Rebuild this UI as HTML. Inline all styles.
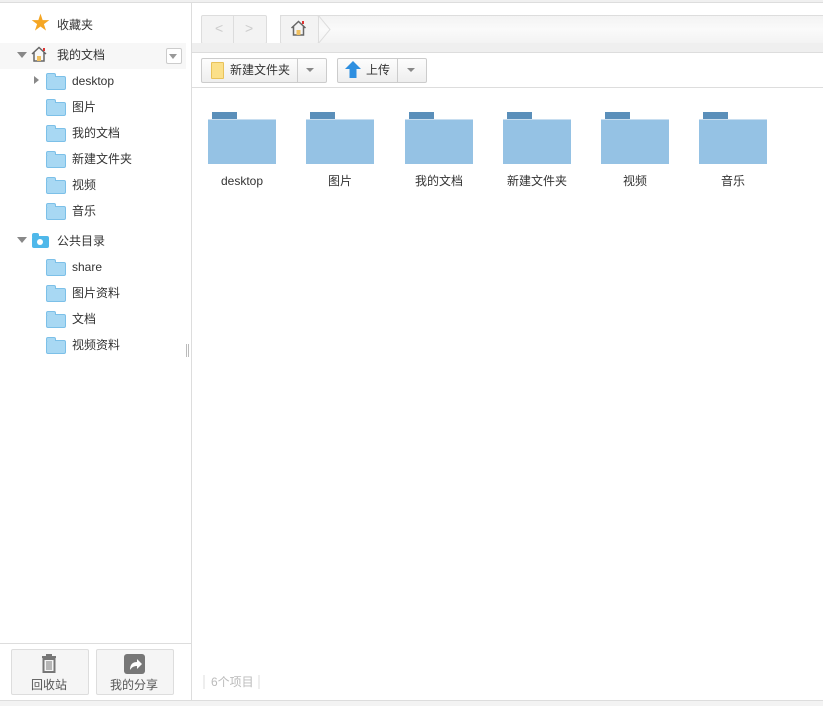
<!DOCTYPE html><html><head><meta charset="utf-8"><style>
body{margin:0;width:823px;height:705px;position:relative;background:#fff;font-family:"Liberation Sans","Noto Sans CJK SC",sans-serif;font-size:12px;color:#333;overflow:hidden}
.a{position:absolute}
.fi{position:absolute;width:18px;height:12px;background:#a8d8f3;border:1px solid #7cc0e8;border-radius:2px}
.fi:before{content:"";position:absolute;left:-1px;top:-4px;width:8px;height:3px;background:#a8d8f3;border:1px solid #7cc0e8;border-bottom:none;border-radius:2px 2px 0 0}
.t{position:absolute;font-size:12px;color:#333;line-height:14px;white-space:nowrap}
.big{position:absolute;top:112px;width:68px;height:51px}
.big i{position:absolute;left:4px;top:0;width:25px;height:7px;background:#5a8fba}
.big b{position:absolute;left:0;top:7px;width:68px;height:44px;background:#95c2e4;border-top:1px solid #c8def0}
.lb{position:absolute;top:174px;width:98px;text-align:center;font-size:12px;line-height:14px}
.btn{position:absolute;border:1px solid #ccc;border-radius:2px;background:linear-gradient(#fdfdfd,#eee)}
</style></head><body>
<div class="a" style="left:0;top:0;width:823px;height:2px;background:#f0f0f0"></div>
<div class="a" style="left:0;top:2px;width:823px;height:1px;background:#ddd"></div>
<div class="a" style="left:191px;top:3px;width:1px;height:702px;background:#ddd"></div>
<div class="a" style="left:0;top:700px;width:823px;height:5px;background:#f3f3f3;border-top:1px solid #ddd"></div>
<!-- sidebar -->
<div class="a" style="left:31px;top:14px;color:#f5a623;font-size:19px;line-height:20px">★</div>
<div class="t" style="left:57px;top:18px">收藏夹</div>
<div class="a" style="left:0;top:43px;width:186px;height:26px;background:#f7f7f7"></div>
<div class="a" style="left:17px;top:52px;border:5px solid transparent;border-top:6px solid #888;border-bottom:none"></div>
<svg class="a" style="left:31px;top:46px" width="16" height="16"><path d="M1 8L8 1.5 15 8M3 6.5V15H13V6.5" fill="none" stroke="#666" stroke-width="1.5"/><rect x="6" y="10" width="4" height="5" fill="#f0c060"/><rect x="12" y="2" width="2" height="3" fill="#d33"/></svg>
<div class="t" style="left:57px;top:48px">我的文档</div>
<div class="a" style="left:166px;top:48px;width:14px;height:14px;border:1px solid #ccc;border-radius:2px;background:#fff"></div>
<div class="a" style="left:169px;top:54px;border:4px solid transparent;border-top:5px solid #999;border-bottom:none"></div>
<div class="a" style="left:34px;top:76px;border:4px solid transparent;border-left:5px solid #888;border-right:none"></div>
<div class="fi" style="left:46px;top:76px"></div><div class="t" style="left:72px;top:74px">desktop</div>
<div class="fi" style="left:46px;top:102px"></div><div class="t" style="left:72px;top:100px">图片</div>
<div class="fi" style="left:46px;top:128px"></div><div class="t" style="left:72px;top:126px">我的文档</div>
<div class="fi" style="left:46px;top:154px"></div><div class="t" style="left:72px;top:152px">新建文件夹</div>
<div class="fi" style="left:46px;top:180px"></div><div class="t" style="left:72px;top:178px">视频</div>
<div class="fi" style="left:46px;top:206px"></div><div class="t" style="left:72px;top:204px">音乐</div>
<div class="a" style="left:17px;top:237px;border:5px solid transparent;border-top:6px solid #888;border-bottom:none"></div>
<div class="a" style="left:32px;top:236px;width:17px;height:12px;background:#4fb8ea;border-radius:2px"></div>
<div class="a" style="left:32px;top:233px;width:7px;height:4px;background:#4fb8ea;border-radius:2px 2px 0 0"></div>
<div class="a" style="left:37px;top:239px;width:6px;height:6px;background:#fff;border-radius:50%"></div>
<div class="t" style="left:57px;top:234px">公共目录</div>
<div class="fi" style="left:46px;top:262px"></div><div class="t" style="left:72px;top:260px">share</div>
<div class="fi" style="left:46px;top:288px"></div><div class="t" style="left:72px;top:286px">图片资料</div>
<div class="fi" style="left:46px;top:314px"></div><div class="t" style="left:72px;top:312px">文档</div>
<div class="fi" style="left:46px;top:340px"></div><div class="t" style="left:72px;top:338px">视频资料</div>
<div class="a" style="left:186px;top:344px;width:1px;height:13px;background:#bbb"></div>
<div class="a" style="left:188px;top:344px;width:1px;height:13px;background:#bbb"></div>
<div class="a" style="left:0;top:643px;width:191px;height:1px;background:#ddd"></div>
<div class="btn" style="left:11px;top:649px;width:76px;height:44px;background:#f5f5f5;border-color:#ddd"></div>
<svg class="a" style="left:40px;top:653px" width="18" height="20"><rect x="2" y="3" width="14" height="2" fill="#777"/><rect x="6" y="1" width="6" height="2" fill="#777"/><rect x="3.5" y="6" width="11" height="13" fill="none" stroke="#777" stroke-width="2"/><path d="M7 8v9M9 8v9M11 8v9" stroke="#777"/></svg>
<div class="t" style="left:31px;top:678px;color:#555">回收站</div>
<div class="btn" style="left:96px;top:649px;width:76px;height:44px;background:#f5f5f5;border-color:#ddd"></div>
<div class="a" style="left:124px;top:654px;width:21px;height:20px;background:#777;border-radius:3px"></div>
<svg class="a" style="left:124px;top:654px" width="21" height="20"><path d="M6 16C6 10 9 8 13 8V5l5 5-5 5v-3c-3 0-5 1-7 4z" fill="#fff"/></svg>
<div class="t" style="left:110px;top:678px;color:#555">我的分享</div>
<!-- toolbars -->
<div class="a" style="left:192px;top:3px;width:631px;height:39px;background:#fff"></div>
<div class="a" style="left:280px;top:15px;width:543px;height:27px;background:linear-gradient(#f3f3f3,#fafafa 50%,#f3f3f3);border-top:1px solid #ddd;border-bottom:1px solid #ddd"></div>
<div class="btn" style="left:201px;top:15px;width:64px;height:27px;background:#f3f3f3;border-color:#ddd"></div>
<div class="a" style="left:233px;top:15px;width:1px;height:29px;background:#ddd"></div>
<div class="a" style="left:215px;top:20px;color:#ccc;font-size:14px">&lt;</div>
<div class="a" style="left:245px;top:20px;color:#ccc;font-size:14px">&gt;</div>
<div class="btn" style="left:280px;top:15px;width:37px;height:27px;background:#f3f3f3;border-color:#ddd"></div>
<svg class="a" style="left:290px;top:20px" width="17" height="16"><path d="M1.5 8L8.5 1.5 15.5 8M3.5 6.5V15H13.5V6.5" fill="none" stroke="#666" stroke-width="1.5"/><rect x="6.5" y="10" width="4" height="5" fill="#f0c060"/><rect x="12" y="1" width="2" height="3" fill="#d33"/></svg>
<svg class="a" style="left:318px;top:15px" width="14" height="29"><path d="M0 0L12 14.5 0 29" fill="none" stroke="#ddd"/></svg>
<div class="a" style="left:192px;top:43px;width:631px;height:9px;background:#efefef"></div>
<div class="a" style="left:192px;top:52px;width:631px;height:1px;background:#ddd"></div>
<div class="a" style="left:192px;top:87px;width:631px;height:1px;background:#ddd"></div>
<div class="btn" style="left:201px;top:58px;width:124px;height:23px"></div>
<div class="a" style="left:297px;top:58px;width:1px;height:25px;background:#ccc"></div>
<div class="a" style="left:211px;top:62px;width:11px;height:15px;background:#fbe08a;border:1px solid #e8c25a;border-radius:1px"></div>
<div class="t" style="left:230px;top:63px">新建文件夹</div>
<div class="a" style="left:306px;top:68px;border:4px solid transparent;border-top:4px solid #888;border-bottom:none"></div>
<div class="btn" style="left:337px;top:58px;width:88px;height:23px"></div>
<div class="a" style="left:397px;top:58px;width:1px;height:25px;background:#ccc"></div>
<svg class="a" style="left:344px;top:60px" width="18" height="19"><path d="M9 1L17 9H12.5V18H5.5V9H1z" fill="#2e8fe0"/></svg>
<div class="t" style="left:366px;top:63px">上传</div>
<div class="a" style="left:407px;top:68px;border:4px solid transparent;border-top:4px solid #888;border-bottom:none"></div>
<!-- files -->
<div class="big" style="left:208px"><i></i><b></b></div><div class="lb" style="left:193px">desktop</div>
<div class="big" style="left:306px"><i></i><b></b></div><div class="lb" style="left:291px">图片</div>
<div class="big" style="left:405px"><i></i><b></b></div><div class="lb" style="left:390px">我的文档</div>
<div class="big" style="left:503px"><i></i><b></b></div><div class="lb" style="left:488px">新建文件夹</div>
<div class="big" style="left:601px"><i></i><b></b></div><div class="lb" style="left:586px">视频</div>
<div class="big" style="left:699px"><i></i><b></b></div><div class="lb" style="left:684px">音乐</div>
<div class="a" style="left:203px;top:675px;width:2px;height:14px;background:#eee"></div>
<div class="t" style="left:211px;top:675px;color:#bbb">6个项目</div>
<div class="a" style="left:258px;top:675px;width:2px;height:14px;background:#eee"></div>
</body></html>
